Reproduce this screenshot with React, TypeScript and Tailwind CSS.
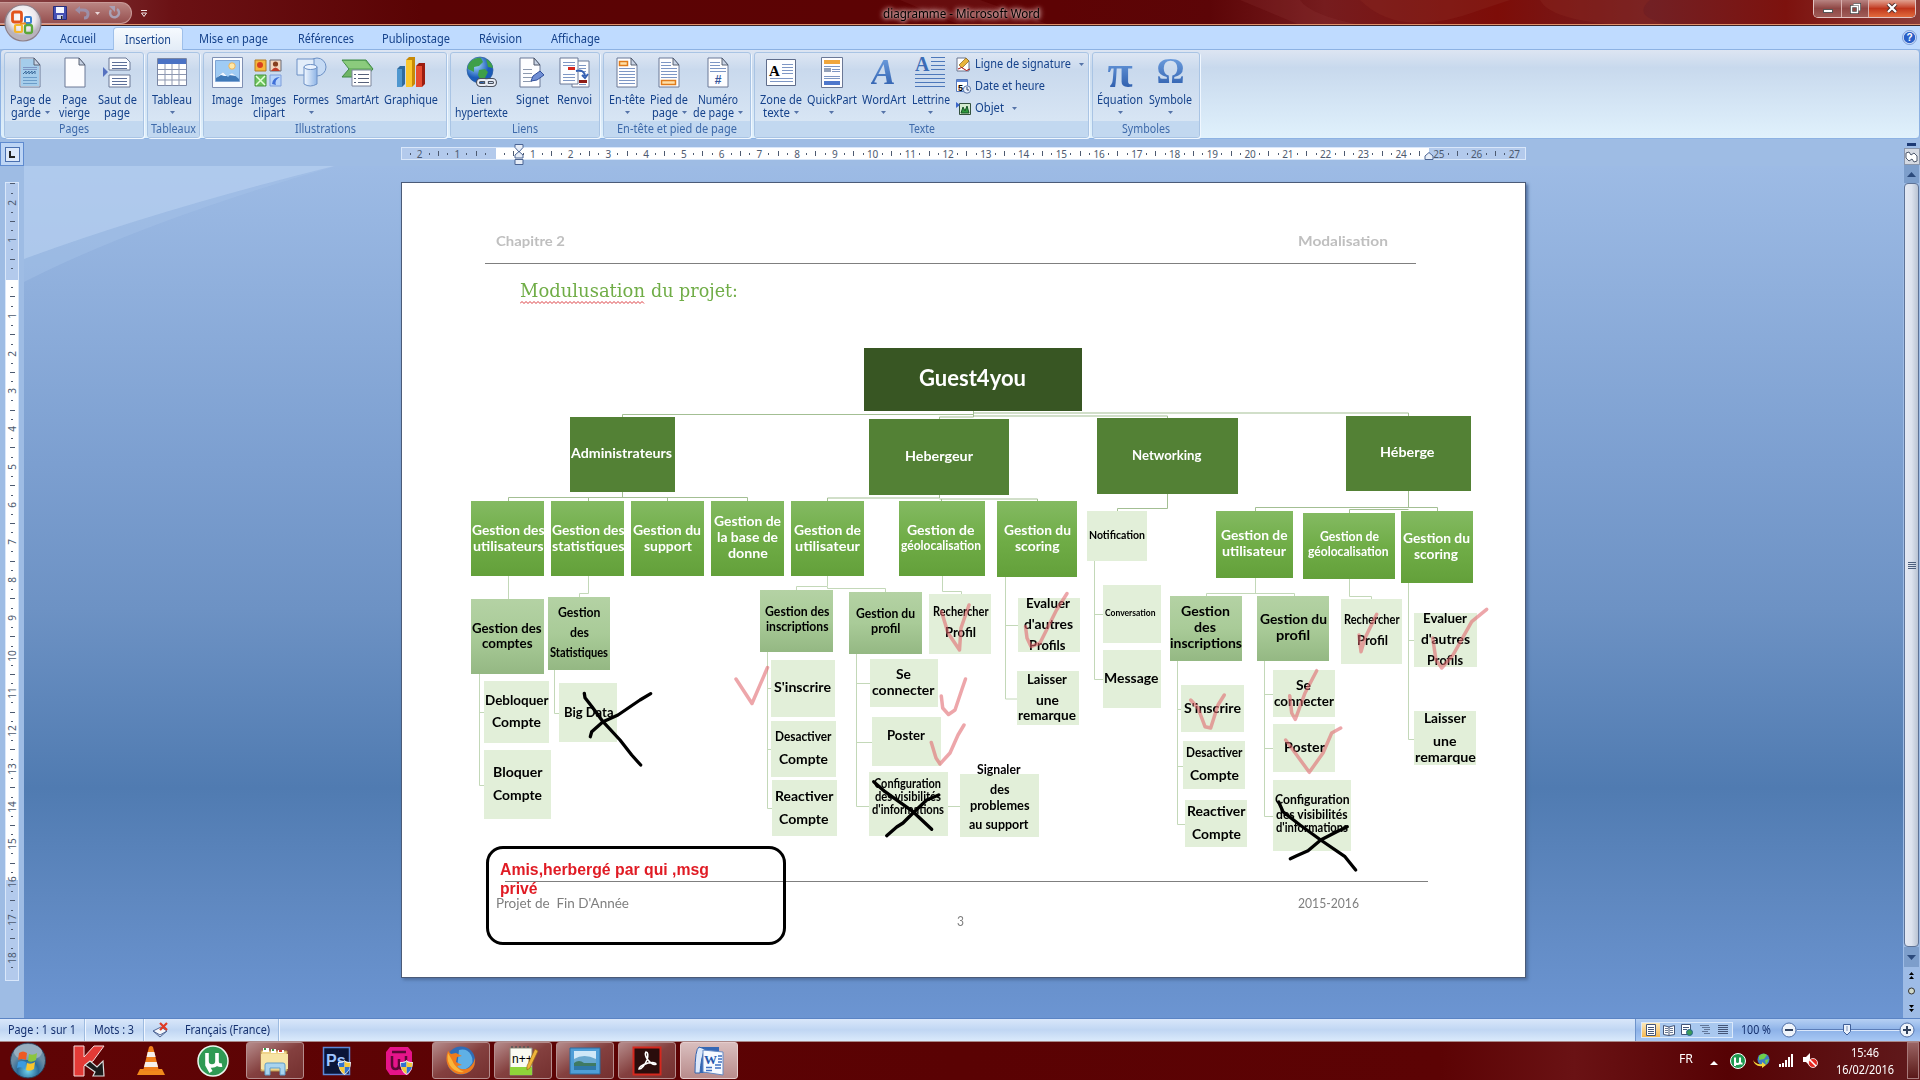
import React, { useLayoutEffect, useRef, useState } from "react";

/* Text squeezed or stretched horizontally to an exact width. */
function Fit({ w, children, className = "" }: { w: number; children: string; className?: string }) {
  const ref = useRef<HTMLSpanElement>(null);
  const [scale, setScale] = useState(1);
  useLayoutEffect(() => {
    const el = ref.current;
    if (el && el.offsetWidth) setScale(w / el.getBoundingClientRect().width * scale);
  }, [w, children]);
  return (
    <span className={"block shrink-0 text-left " + className} style={{ width: w }}>
      <span ref={ref} className="inline-block origin-left whitespace-pre" style={{ transform: `scaleX(${scale})` }}>
        {children}
      </span>
    </span>
  );
}

/* ---------- Ribbon icons ---------- */

const Sheet = ({ children, w = 22 }: { children?: React.ReactNode; w?: number }) => (
  <svg width={w} height="31" viewBox="0 0 22 31">
    <path d="M1 1h14l6 7v22H1z" fill="#fdfdff" stroke="#6b7896" />
    {children}
    <path d="M15 1v7h6z" fill="#c9d3e4" stroke="#4c5568" strokeWidth=".9" />
  </svg>
);
const lines = (x1: number, x2: number, ys: number[], c = "#7d96c4") =>
  ys.map((y) => <path key={y} d={`M${x1} ${y}H${x2}`} stroke={c} strokeWidth="1" />);

const IconCover = () => (
  <Sheet>
    <path d="M2 2h13l5 6v21H2z" fill="#a5cdeb" />
    {lines(4, 18, [10.5, 12.5])}
    <path d="M4 17l3-3v3l3-3v3l3-3v3l3-3v3" stroke="#3d6d9c" fill="none" />
    {lines(4, 18, [20.5, 23.5, 26.5], "#6b9cc8")}
  </Sheet>
);
const IconBreak = () => (
  <svg width="28" height="31" viewBox="0 0 28 31">
    <path d="M6 13V1h17l4 4v8zM6 30V18h21v12z" fill="#fdfdff" stroke="#6b7896" />
    {lines(9, 24, [5.5, 8.5, 11.5, 21.5, 24.5, 27.5], "#5d6f98")}
    <path d="M0 10l5 5-5 5z" fill="#5571c0" />
  </svg>
);
const IconTable = () => (
  <svg width="30" height="29" viewBox="0 0 30 29">
    <path d="M.5.5h29v27H.5z" fill="#fff" stroke="#7b87a4" />
    <path d="M1 1h28v5H1z" fill="#4a72c4" />
    <path d="M1 11.5h28M1 16.5h28M1 22h28M8 6v22M15 6v22M22 6v22" stroke="#8d97b0" />
  </svg>
);
const IconImage = () => (
  <svg width="31" height="31" viewBox="0 0 31 31">
    <path d="M.5.5h30v30H.5z" fill="#f8fbff" stroke="#7f90b3" />
    <path d="M3.500 3.500h24v21h-24z" fill="#9fcbf4" stroke="#7fa5d4" />
    <circle cx="20" cy="9" r="3.200" fill="#ffe9a8" stroke="#eeb45a" />
    <path d="M4 24v-3l7-6 5 5 4-4 7 6v2z" fill="#3f79b8" />
    <path d="M4 21l7-6 4 4-3 0-3-1zM17 18l3-2 4 3z" fill="#eef6ff" />
  </svg>
);
const IconClip = () => (
  <svg width="29" height="29" viewBox="0 0 29 29">
    <path d="M1 2h11v11H1z" fill="#f6b73c" stroke="#b17c24" />
    <circle cx="6" cy="7" r="3" fill="#d8401f" />
    <path d="M16 2h11v11H16z" fill="#f2d7c0" stroke="#6b6b77" />
    <circle cx="21.500" cy="6" r="2.600" fill="#874020" />
    <path d="M17 13q4.500-7 9 0z" fill="#c23c28" />
    <path d="M1 17h11v11H1z" fill="#6cc35c" stroke="#4b9440" />
    <path d="M2 18l9 9M11 18l-9 9" stroke="#e3ffd9" strokeWidth="1.500" />
    <path d="M16 17h11v11H16z" fill="#b8d3fa" stroke="#7f9edb" />
    <path d="M18 26q1-7 8-7-6 3-4 8z" fill="#3f6fd8" />
  </svg>
);
const IconShapes = () => (
  <svg width="31" height="31" viewBox="0 0 31 31">
    <defs>
      <linearGradient id="cyl" x1="0" x2="1">
        <stop offset="0" stopColor="#f2f8ff" />
        <stop offset="1" stopColor="#8eb4e6" />
      </linearGradient>
    </defs>
    <circle cx="21" cy="10" r="9" fill="#c5daf4" stroke="#6c90c5" />
    <path d="M1 2h17v16H1z" fill="#e2edfa" stroke="#6c90c5" />
    <path d="M8 10v17q6 4 13 0V10z" fill="url(#cyl)" stroke="#6c90c5" />
    <ellipse cx="14.500" cy="10" rx="6.500" ry="2.500" fill="#eaf3ff" stroke="#6c90c5" />
  </svg>
);
const IconSmart = () => (
  <svg width="33" height="29" viewBox="0 0 33 29">
    <path d="M1 2h24l7 9-7 8H1l7-8z" fill="#6fb566" stroke="#3f8a45" />
    <path d="M2 3h22l6 7H8z" fill="#8bcb7d" />
    <path d="M11 12h19v16H11z" fill="#fff" stroke="#7c869c" />
    {lines(17, 28, [16.5, 20.5, 24.500], "#56617a")}
    {lines(13, 15, [16.5, 20.5, 24.500], "#56617a")}
  </svg>
);
const IconChart = () => (
  <svg width="30" height="31" viewBox="0 0 30 31">
    <path d="M1 12l3-3h5v18l-3 3H1z" fill="#2f6b9f" />
    <path d="M1 12h5v18H1z" fill="#4f97cf" />
    <path d="M10 3l3-3h6v27l-3 3h-6z" fill="#c88a06" />
    <path d="M10 3h6v27h-6z" fill="#fbc72d" />
    <path d="M20 9l3-3h6v21l-3 3h-6z" fill="#9c1d10" />
    <path d="M20 9h6v21h-6z" fill="#e64c32" />
  </svg>
);
const IconLink = () => (
  <svg width="32" height="32" viewBox="0 0 32 32">
    <defs>
      <radialGradient id="globe" cx=".35" cy=".3">
        <stop offset="0" stopColor="#a8dcff" />
        <stop offset="1" stopColor="#1b5bb8" />
      </radialGradient>
    </defs>
    <circle cx="14" cy="14" r="13" fill="url(#globe)" stroke="#2a5c9e" strokeWidth=".7" />
    <path d="M5 5q6-4 10-3l2 4-4 4-5 1 0 5-6-3q-1-4 3-8zM13 14l6-1 3 3-4 8-3 1-3-6zM20 3q6 3 7 9l-5-1z" fill="#3f9f49" />
    <g fill="none" stroke="#4b515e" strokeWidth="4">
      <rect x="12" y="24" width="9" height="5" rx="2.500" />
      <rect x="20" y="24" width="9" height="5" rx="2.500" />
    </g>
    <g fill="none" stroke="#e9edf5" strokeWidth="1.800">
      <rect x="12" y="24" width="9" height="5" rx="2.500" />
      <rect x="20" y="24" width="9" height="5" rx="2.500" />
    </g>
  </svg>
);
const IconBookmark = () => (
  <svg width="26" height="31" viewBox="0 0 26 31">
    <path d="M1 1h14l6 7v22H1z" fill="#fdfdff" stroke="#6b7896" />
    <path d="M15 1v7h6z" fill="#c9d3e4" stroke="#4c5568" />
    {lines(4, 13, [12.5, 16.5, 20.5, 24.5], "#8c98ae")}
    <path d="M12 24l2-5 7-5 4 4-7 5z" fill="#6f8ed4" stroke="#31509c" />
  </svg>
);
const IconXref = () => (
  <svg width="31" height="31" viewBox="0 0 31 31">
    <path d="M13 4h17v26H13z" fill="#fdfdff" stroke="#6b7896" />
    {lines(20, 27, [8.5, 11.5, 14.5, 27.5])}
    <path d="M20 23h8v3h-8z" fill="#8e1c16" />
    <path d="M1 1h18v26H1z" fill="#fdfdff" stroke="#6b7896" />
    {lines(4, 16, [5.5, 8.5, 17.5, 20.5, 23.5])}
    <path d="M9 10h7v3H9z" fill="#d6261c" />
    <path d="M17 14q8-2 9 5m-3-1l3 3 3-4" fill="none" stroke="#345fb4" strokeWidth="2" />
  </svg>
);
const IconHeader = () => (
  <Sheet>
    {lines(3, 19, [11.5, 14.5, 17.5, 20.5, 23.5, 26.5])}
    <path d="M3.500 4.500h8v4h-8z" fill="#ffdfa8" stroke="#e07b1b" strokeWidth="1.500" />
  </Sheet>
);
const IconFooter = () => (
  <Sheet>
    {lines(3, 13, [5.5, 8.5])}
    {lines(3, 19, [11.5, 14.5, 17.5, 20.500])}
    <path d="M3.500 23.500h14v4h-14z" fill="#ffdfa8" stroke="#e07b1b" strokeWidth="1.500" />
  </Sheet>
);
const IconPageNo = () => (
  <Sheet>
    {lines(3, 13, [5.5, 8.5])}
    {lines(3, 19, [11.5, 14.500])}
    <text x="11" y="27" textAnchor="middle" fontSize="12" fontWeight="bold" fill="#33559b" fontFamily="Liberation Sans, sans-serif">#</text>
  </Sheet>
);
const IconTextbox = () => (
  <svg width="30" height="27" viewBox="0 0 30 27">
    <path d="M.5.500h29v26H.500z" fill="#fdfeff" stroke="#5f6d8b" />
    <text x="3" y="17" fontSize="15" fontWeight="bold" fontFamily="Liberation Serif, serif">A</text>
    {lines(16, 27, [5.5, 8.5, 11.5, 14.500])}
    {lines(4, 27, [19.5, 22.500])}
  </svg>
);
const IconQuick = () => (
  <svg width="22" height="31" viewBox="0 0 22 31">
    <path d="M.5.5h21v30H.5z" fill="#fdfdff" stroke="#6b7896" />
    <path d="M3 3h16v4H3z" fill="#f0a63c" />
    {lines(3, 19, [9.5, 19.5, 21.500])}
    <path d="M3 11h7v4H3z" fill="#93a0b9" />
    {lines(11, 19, [12.500, 14.500])}
    <path d="M3 24h16v4H3z" fill="#4e77cc" />
  </svg>
);
const IconDrop = () => (
  <svg width="31" height="32" viewBox="0 0 31 32">
    <text x="0" y="15" fontSize="20" fontWeight="bold" fill="#3b6cb6" fontFamily="Liberation Serif, serif">A</text>
    {lines(16, 30, [1.5, 5.5, 9.5, 13.500], "#4d78ba")}
    {lines(0, 30, [18.5, 22.5, 26.500, 30.500], "#4d78ba")}
  </svg>
);
const IconSig = () => (
  <svg width="15" height="15" viewBox="0 0 15 15">
    <path d="M1 1h9l3 3v10H1z" fill="#fff" stroke="#68748e" />
    <path d="M3 8l3 3 7-7-3-3z" fill="#e8b43c" stroke="#84601a" strokeWidth=".7" />
    <path d="M2 12q4-3 6 0t6 0" stroke="#a11" fill="none" />
  </svg>
);
const IconDate = () => (
  <svg width="15" height="15" viewBox="0 0 15 15">
    <path d="M.5.5h11v12H.5z" fill="#fff" stroke="#5578bb" />
    <path d="M1 1h10v2H1z" fill="#5d86d4" />
    <text x="2" y="11.500" fontSize="9" fontWeight="bold" fontFamily="Liberation Sans, sans-serif">5</text>
    <circle cx="11" cy="10.500" r="3.700" fill="#e8f0fd" stroke="#5c77a8" />
    <path d="M11 8v3h2" stroke="#33486e" fill="none" />
  </svg>
);
const IconObj = () => (
  <svg width="15" height="15" viewBox="0 0 15 15">
    <path d="M3.500 2.500h11v11h-11z" fill="#d4ecd0" stroke="#33513d" />
    <path d="M5 12l2-6 2 4 2-5 2 7z" fill="#2f9a3c" stroke="#185426" />
    <path d="M0 1l4 3-4 3z" fill="#3b66c8" />
  </svg>
);

const Glyph = ({ children, className = "" }: { children: string; className?: string }) => (
  <span
    className={
      "bg-gradient-to-b from-[#6fa0e0] to-[#2f5fae] bg-clip-text font-['Liberation_Serif',serif] font-bold leading-[32px] text-transparent " +
      className
    }
  >
    {children}
  </span>
);

const Arrow = ({ className = "" }: { className?: string }) => (
  <svg width="5" height="3" viewBox="0 0 5 3" className={className}>
    <path d="M0 0h5L2.500 3z" fill="#5573a8" />
  </svg>
);

/* ---------- Ribbon ---------- */

type Item = { w: number; icon: React.ReactNode; l1: string; w1: number; l2?: string; w2?: number; arrow?: boolean };

function Tool({ w, icon, l1, w1, l2, w2 = 0, arrow }: Item) {
  return (
    <div className="flex shrink-0 flex-col items-center text-xs text-[#15428b]" style={{ width: w }}>
      <div className="flex h-8 items-center justify-center">{icon}</div>
      <div className="mt-[5px] h-[13px] leading-[13px]"><Fit w={w1}>{l1}</Fit></div>
      <div className="flex h-[13px] items-center gap-1 leading-[13px]">
        {l2 && <Fit w={w2}>{l2}</Fit>}
        {arrow && <Arrow />}
      </div>
    </div>
  );
}

function Group({ w, title, tw, mr = 3, children }: { w: number; title: string; tw: number; mr?: number; children: React.ReactNode }) {
  return (
    <div
      className="flex h-[86px] shrink-0 flex-col rounded-[3px] border border-[#a9c4e4] bg-gradient-to-b from-[#dde6f3] via-[#c9d9ed] via-20% to-[#dce9f6] shadow-[1px_1px_0_#f0f7ff]"
      style={{ width: w, marginRight: mr }}
    >
      <div className="flex h-[68px] justify-center pr-[3px] pt-[3px]">{children}</div>
      <div className="flex h-4 items-center justify-center rounded-b-[2px] bg-[#c2d8f0] text-xs leading-4 text-[#3e6aaa]">
        <Fit w={tw}>{title}</Fit>
      </div>
    </div>
  );
}

const pages: Item[] = [
  { w: 52, icon: <IconCover />, l1: "Page de", w1: 41, l2: "garde", w2: 30, arrow: true },
  { w: 37, icon: <Sheet />, l1: "Page", w1: 25, l2: "vierge", w2: 31 },
  { w: 48, icon: <IconBreak />, l1: "Saut de", w1: 39, l2: "page", w2: 26 },
];
const illus: Item[] = [
  { w: 41, icon: <IconImage />, l1: "Image", w1: 31 },
  { w: 42, icon: <IconClip />, l1: "Images", w1: 35, l2: "clipart", w2: 32 },
  { w: 43, icon: <IconShapes />, l1: "Formes", w1: 36, arrow: true },
  { w: 49, icon: <IconSmart />, l1: "SmartArt", w1: 43 },
  { w: 59, icon: <IconChart />, l1: "Graphique", w1: 54 },
];
const liens: Item[] = [
  { w: 58, icon: <IconLink />, l1: "Lien", w1: 21, l2: "hypertexte", w2: 53 },
  { w: 43, icon: <IconBookmark />, l1: "Signet", w1: 33 },
  { w: 41, icon: <IconXref />, l1: "Renvoi", w1: 35 },
];
const entete: Item[] = [
  { w: 43, icon: <IconHeader />, l1: "En-tête", w1: 36, arrow: true },
  { w: 41, icon: <IconFooter />, l1: "Pied de", w1: 38, l2: "page", w2: 26, arrow: true },
  { w: 56, icon: <IconPageNo />, l1: "Numéro", w1: 40, l2: "de page", w2: 41, arrow: true },
];
const texte: Item[] = [
  { w: 49, icon: <IconTextbox />, l1: "Zone de", w1: 42, l2: "texte", w2: 27, arrow: true },
  { w: 53, icon: <IconQuick />, l1: "QuickPart", w1: 50, arrow: true },
  { w: 51, icon: <Glyph className="text-[36px] italic">A</Glyph>, l1: "WordArt", w1: 44, arrow: true },
  { w: 43, icon: <IconDrop />, l1: "Lettrine", w1: 38, arrow: true },
];
const symb: Item[] = [
  { w: 52, icon: <Glyph className="text-[46px]">π</Glyph>, l1: "Équation", w1: 46, arrow: true },
  { w: 49, icon: <Glyph className="text-[35px]">Ω</Glyph>, l1: "Symbole", w1: 43, arrow: true },
];
const tools = (a: Item[]) => a.map((i) => <Tool key={i.l1} {...i} />);

const small: [React.ReactNode, string, number, boolean][] = [
  [<IconSig />, "Ligne de signature", 96, true],
  [<IconDate />, "Date et heure", 70, false],
  [<IconObj />, "Objet", 29, true],
];

const tabs: [string, number, number][] = [
  ["Accueil", 36, 43], ["Insertion", 46, 70], ["Mise en page", 69, 101], ["Références", 56, 83],
  ["Publipostage", 68, 98], ["Révision", 43, 70], ["Affichage", 49, 80],
];

function TitleBar() {
  return (
    <div className="relative h-[26px] shrink-0 overflow-hidden border-b border-[#3a2428] bg-[linear-gradient(90deg,#8a4648_0,#6b1114_9%,#5a0304_22%,#5d0304_55%,#5c0507_63%,#761c1e_69%,#7d0d08_78%,#722024_86%,#7d120e_93%,#8c3c38_100%)]">
      <svg className="absolute left-0 top-0" width="1920" height="25">
        <path d="M1360 0q40 40 120 10l30-10zM1540 0q10 20 80 25h50q-40-8-20-25z" fill="#8c2a22" opacity=".35" />
        <path d="M1240 0l60 25h60q-50-10-60-25zM900 0l60 25h90l-70-25z" fill="#a04a48" opacity=".15" />
      </svg>
      <div className="absolute inset-x-0 bottom-0 h-px bg-[#e0906c]" />
      <div className="relative flex h-[25px] items-start">
        <div className="mt-0.5 flex h-[22px] w-[132px] items-center rounded-r-full border border-l-0 border-[#c99a98] bg-gradient-to-b from-[#b98482] to-[#96504f] pl-[53px]">
          <svg width="14" height="14" viewBox="0 0 14 14">
            <path d="M.5.5h13v13H.5z" fill="#4650b4" stroke="#272d78" />
            <path d="M3 1h8v6H3z" fill="#f4f6ff" />
            <path d="M4 9h6v4H4z" fill="#c9d0ec" /><path d="M8 10h1.500v3H8z" fill="#222" />
          </svg>
          <svg className="ml-2" width="16" height="14" viewBox="0 0 16 14">
            <path d="M3 4h5q5 0 5 4t-4 4" fill="none" stroke="#9c8fa8" strokeWidth="3" /><path d="M0 4l5-4v8z" fill="#9c8fa8" />
          </svg>
          <svg className="ml-1" width="5" height="3"><path d="M0 0h5L2.500 3z" fill="#ead7d8" /></svg>
          <svg className="ml-2" width="14" height="14" viewBox="0 0 14 14">
            <path d="M9 3a4.500 4.500 0 1 1-6 1" fill="none" stroke="#a9a0b4" strokeWidth="2.500" /><path d="M1 0h6v6z" fill="#a9a0b4" />
          </svg>
        </div>
        <svg className="ml-[9px] mt-2.5" width="6" height="7" viewBox="0 0 6 7"><path d="M0 .5h6M.5 3h5L3 6.500z" stroke="#f2e6e6" fill="none" /></svg>
        <div className="flex flex-1 justify-center pr-[37px]">
          <div className="h-6 pt-1 text-[12px] leading-5 text-black [text-shadow:0_0_3px_#d8b0b0,0_0_5px_#d0a4a4,0_0_6px_#c89898,0_0_8px_#c09090]">
            <Fit w={157}>diagramme - Microsoft Word</Fit>
          </div>
        </div>
        <div className="mr-[4px] flex h-[18px] w-[103px] overflow-hidden rounded-b-[5px] border border-t-0 border-[#e3c4c2]">
          <div className="flex w-7 items-end justify-center border-r border-[#d9b0ae] bg-gradient-to-b from-[#b88482] via-[#8e4644] via-50% to-[#a05d58] pb-1"><div className="h-[4px] w-[10px] border border-[#555] bg-white" /></div>
          <div className="flex w-[27px] items-center justify-center border-r border-[#d9b0ae] bg-gradient-to-b from-[#b88482] via-[#8e4644] via-50% to-[#a05d58]">
            <svg width="11" height="11" viewBox="0 0 11 11"><path d="M3.500 1.500h6v6M1.500 3.500h6v6h-6z" fill="none" stroke="#444" strokeWidth="3" /><path d="M3.500 1.500h6v6M1.500 3.500h6v6h-6z" fill="none" stroke="#fff" strokeWidth="1.500" /></svg>
          </div>
          <div className="flex flex-1 items-center justify-center bg-gradient-to-b from-[#e0a090] via-[#c0351b] via-50% to-[#e26a3c] pb-[2px]">
            <svg width="12" height="10" viewBox="0 0 12 10"><path d="M2 1l8 8M10 1L2 9" stroke="#4a2a28" strokeWidth="4" /><path d="M2 1l8 8M10 1L2 9" stroke="#fff" strokeWidth="2.300" /></svg>
          </div>
        </div>
      </div>
    </div>
  );
}

const OfficeButton = () => (
  <svg className="absolute left-[3px] top-[3px] z-10" width="40" height="40" viewBox="0 0 40 40">
    <defs>
      <radialGradient id="orb" cx=".5" cy=".35">
        <stop offset="0" stopColor="#fff" /><stop offset=".7" stopColor="#ece9ee" /><stop offset="1" stopColor="#b9b3bd" />
      </radialGradient>
    </defs>
    <circle cx="20" cy="20" r="18" fill="url(#orb)" stroke="#8d7f88" strokeWidth="1.200" />
    <g fill="none" strokeWidth="2.800">
      <rect x="9.500" y="9" width="9" height="10" rx="2" stroke="#e2541c" />
      <rect x="22" y="14" width="6" height="6" rx="1" stroke="#3b80d0" strokeWidth="2" />
      <rect x="12" y="22" width="7" height="7" rx="1" stroke="#f5b62c" strokeWidth="2.200" />
      <rect x="22" y="22" width="7" height="8" rx="2" stroke="#5ba83a" strokeWidth="2.300" />
      <path d="M17 20.500h6" stroke="#f08c20" strokeWidth="2" />
    </g>
  </svg>
);

function Ribbon() {
  return (
    <>
      <div className="flex h-[23px] shrink-0 items-end justify-between bg-[#bfdbff] pr-[3px]">
        <div className="flex h-[22px] pl-[56px]">
          {tabs.map(([t, w, box], i) => (
            <div
              key={t}
              className={
                "flex items-center justify-center pt-[2px] text-xs leading-4 text-[#15428b] " +
                (i === 1 ? "z-[1] ml-[14px] h-[23px] rounded-t-[4px] border border-b-0 border-[#9fc0ea] bg-gradient-to-b from-[#f6fafe] to-[#e3ecf7]" : "")
              }
              style={{ width: box }}
            >
              <Fit w={w}>{t}</Fit>
            </div>
          ))}
        </div>
        <svg className="mb-[4px]" width="15" height="15" viewBox="0 0 15 15">
          <circle cx="7.500" cy="7.500" r="6.500" fill="#2a5fc8" stroke="#dfeafc" strokeWidth="1.500" />
          <circle cx="7.500" cy="7.500" r="7" fill="none" stroke="#4c79c4" strokeWidth=".7" />
          <text x="7.500" y="11" textAnchor="middle" fontSize="10" fontWeight="bold" fill="#fff" fontFamily="Liberation Sans, sans-serif">?</text>
        </svg>
      </div>
      <div className="h-[91px] shrink-0 bg-[#9ebce4] pb-px">
        <div className="flex h-[90px] rounded-[4px] border border-[#8db2e3] bg-gradient-to-b from-[#dde5f2] via-[#c8d9ed] via-20% to-[#e0f1fc] pl-[3px] pt-[2px]">
          <Group w={140} title="Pages" tw={30}>{tools(pages)}</Group>
          <Group w={53} title="Tableaux" tw={45}>
            <Tool w={48} icon={<IconTable />} l1="Tableau" w1={40} arrow />
          </Group>
          <Group w={244} title="Illustrations" tw={61}>{tools(illus)}</Group>
          <Group w={150} title="Liens" tw={26}>{tools(liens)}</Group>
          <Group w={148} title="En-tête et pied de page" tw={120}>{tools(entete)}</Group>
          <Group w={335} title="Texte" tw={26}>
            {tools(texte)}
            <div className="flex w-[132px] flex-col gap-[6px] pl-[4px]">
              {small.map(([ic, t, w, a]) => (
                <div key={t} className="flex h-4 items-center gap-1 text-xs leading-4 text-[#15428b]">
                  {ic}<Fit w={w}>{t}</Fit>{a && <Arrow className="ml-1" />}
                </div>
              ))}
            </div>
          </Group>
          <Group w={108} title="Symboles" tw={48}>{tools(symb)}</Group>
        </div>
      </div>
    </>
  );
}

/* ---------- Rulers ---------- */

function Marks({ from, to, vertical }: { from: number; to: number; vertical?: boolean }) {
  const out: React.ReactNode[] = [];
  for (let k = from; k <= to; k++) {
    const m = ((k % 4) + 4) % 4;
    const n = Math.abs(k / 4);
    out.push(
      <span
        key={k}
        className={
          "flex shrink-0 items-center justify-center overflow-visible text-[10px] leading-none text-[#4d5a70] " +
          (vertical ? "h-[9.45px] w-full" : "h-full w-[9.45px]")
        }
      >
        {m === 0 && n !== 0 ? (
          <span className={vertical ? "-rotate-90" : ""}>{n}</span>
        ) : m === 2 ? (
          <i className={vertical ? "h-px w-[5px] bg-[#4d5a70]" : "h-[5px] w-px bg-[#4d5a70]"} />
        ) : m === 0 ? null : (
          <i className={vertical ? "h-px w-[2px] bg-[#4d5a70]" : "h-[2px] w-px bg-[#4d5a70]"} />
        )}
      </span>
    );
  }
  return <>{out}</>;
}

/* ---------- Diagram ---------- */

type Line = [text: string, x1: number, x2: number, y: number, size?: "xl" | "sm" | "xs" | "xxs"];
type Node = { k: "root" | "dark" | "mid" | "sage" | "pale"; b: [number, number, number, number]; t: Line[] };

const nodes: Node[] = [
  { k: "root", b: [864, 348, 218, 63], t: [["Guest4you", 919.5, 1025.5, 379, "xl"]] },
  { k: "dark", b: [570, 417, 105, 75], t: [["Administrateurs", 572, 672, 453.5]] },
  { k: "dark", b: [869, 419, 140, 76], t: [["Hebergeur", 906, 973, 456.5]] },
  { k: "dark", b: [1097, 418, 141, 76], t: [["Networking", 1133, 1201.5, 455.5]] },
  { k: "dark", b: [1346, 416, 125, 75], t: [["Héberge", 1381, 1434.5, 452.5]] },
  { k: "mid", b: [471, 501, 73, 75], t: [["Gestion des", 472.5, 544, 530.5], ["utilisateurs", 473.5, 543, 546.5]] },
  { k: "mid", b: [551, 501, 73, 75], t: [["Gestion des", 552.5, 624, 530.5], ["statistiques", 552.5, 624, 546.5]] },
  { k: "mid", b: [631, 501, 73, 75], t: [["Gestion du", 634, 701, 530.5], ["support", 644.5, 691.5, 546.5]] },
  { k: "mid", b: [711, 501, 73, 75], t: [["Gestion de", 714.5, 780.5, 521.5], ["la base de", 717.5, 777.5, 537.5], ["donne", 728.5, 767.5, 553.5]] },
  { k: "mid", b: [791, 501, 73, 75], t: [["Gestion de", 794.5, 860.5, 530.5], ["utilisateur", 796, 860, 546.5]] },
  { k: "mid", b: [899, 501, 86, 75], t: [["Gestion de", 907.5, 974, 530.5], ["géolocalisation", 901.5, 980.5, 546.5, "sm"]] },
  { k: "mid", b: [997, 501, 80, 76], t: [["Gestion du", 1004.5, 1070.5, 530.5], ["scoring", 1015.5, 1059, 547]] },
  { k: "pale", b: [1087, 511, 60, 50], t: [["Notification", 1089.5, 1144.500, 535.5, "xs"]] },
  { k: "mid", b: [1216, 511, 77, 67], t: [["Gestion de", 1221.5, 1287, 535.5], ["utilisateur", 1222.5, 1285.5, 551.5]] },
  { k: "mid", b: [1303, 513, 92, 66], t: [["Gestion de", 1320.5, 1378.5, 538, "sm"], ["géolocalisation", 1309, 1388.5, 553, "sm"]] },
  { k: "mid", b: [1401, 511, 72, 72], t: [["Gestion du", 1403.5, 1469.5, 538.5], ["scoring", 1414.5, 1457.5, 554.5]] },
  { k: "sage", b: [471, 599, 73, 75], t: [["Gestion des", 473, 541.5, 628.5], ["comptes", 482.5, 532, 644]] },
  { k: "sage", b: [548, 597, 62, 73], t: [["Gestion", 558.5, 600, 614, "sm"], ["des", 570.5, 588.500, 634, "sm"], ["Statistiques", 550.5, 607.5, 654, "sm"]] },
  { k: "sage", b: [760, 590, 73, 62], t: [["Gestion des", 765.5, 829, 613, "sm"], ["inscriptions", 766.5, 828, 628, "sm"]] },
  { k: "sage", b: [849, 592, 73, 62], t: [["Gestion du", 856.5, 914.5, 615, "sm"], ["profil", 871.5, 900, 630, "sm"]] },
  { k: "sage", b: [1170, 596, 72, 65], t: [["Gestion", 1181.5, 1229.5, 611.5], ["des", 1194.5, 1215.5, 627.5], ["inscriptions", 1170.500, 1241.5, 643.5]] },
  { k: "sage", b: [1257, 596, 72, 65], t: [["Gestion du", 1260.5, 1326.5, 619.5], ["profil", 1276.5, 1309.5, 635.5]] },
  { k: "pale", b: [929, 594, 62, 60], t: [["Rechercher", 933.5, 988, 613, "sm"], ["Profil", 945.5, 975.5, 632.5]] },
  { k: "pale", b: [1018, 598, 62, 54], t: [["Evaluer", 1026.5, 1069.5, 603.5], ["d'autres", 1024.5, 1072.5, 624.5], ["Profils", 1030, 1065.5, 645.5]] },
  { k: "pale", b: [1017, 671, 62, 54], t: [["Laisser", 1027.5, 1066.5, 679.5], ["une", 1036.5, 1058.5, 700.5], ["remarque", 1018.500, 1075.5, 715.5]] },
  { k: "pale", b: [1103, 585, 58, 58], t: [["Conversation", 1106, 1155.5, 614, "xxs"]] },
  { k: "pale", b: [1103, 650, 58, 58], t: [["Message", 1104.5, 1158, 678.5]] },
  { k: "pale", b: [484, 681, 65, 62], t: [["Debloquer", 485.5, 548, 701], ["Compte", 492.5, 540.5, 722.5]] },
  { k: "pale", b: [484, 750, 67, 69], t: [["Bloquer", 493.5, 542, 772.5], ["Compte", 493.5, 541.5, 795.5]] },
  { k: "pale", b: [559, 683, 58, 59], t: [["Big Data", 564.5, 613, 712.5]] },
  { k: "pale", b: [771, 660, 64, 57], t: [["S'inscrire", 774.5, 830.5, 687.5]] },
  { k: "pale", b: [771, 721, 65, 56], t: [["Desactiver", 775.5, 831, 738, "sm"], ["Compte", 779.5, 827.5, 759.5]] },
  { k: "pale", b: [772, 780, 65, 56], t: [["Reactiver", 775.5, 833, 796.5], ["Compte", 780, 828.5, 819.5]] },
  { k: "pale", b: [870, 659, 68, 48], t: [["Se", 896.5, 910.5, 674.5], ["connecter", 872.5, 934, 690.5]] },
  { k: "pale", b: [872, 717, 69, 49], t: [["Poster", 887.5, 924.5, 735.5]] },
  { k: "pale", b: [869, 772, 79, 64], t: [["Configuration", 875, 941, 785, "sm"], ["des visibilités", 875.5, 940.5, 798, "sm"], ["d'informations", 872.5, 943.5, 811, "sm"]] },
  { k: "pale", b: [960, 774, 79, 63], t: [["Signaler", 978, 1020.500, 771, "sm"], ["des", 990.5, 1009, 791, "sm"], ["problemes", 970.5, 1029, 806.5, "sm"], ["au support", 970, 1028.5, 826, "sm"]] },
  { k: "pale", b: [1341, 599, 61, 65], t: [["Rechercher", 1344.5, 1399, 621, "sm"], ["Profil", 1357.5, 1387.5, 640.5]] },
  { k: "pale", b: [1414, 613, 63, 54], t: [["Evaluer", 1423.5, 1466.5, 618.5], ["d'autres", 1421.5, 1469.5, 639.5], ["Profils", 1427.5, 1462.5, 660.5]] },
  { k: "pale", b: [1414, 711, 62, 54], t: [["Laisser", 1424.5, 1465.5, 718.5], ["une", 1433.5, 1456, 741.5], ["remarque", 1415.500, 1475.5, 757.5]] },
  { k: "pale", b: [1181, 685, 63, 47], t: [["S'inscrire", 1184.5, 1240.5, 708.5]] },
  { k: "pale", b: [1273, 670, 62, 47], t: [["Se", 1296.5, 1310.5, 685.5], ["connecter", 1274.5, 1333.5, 701.5]] },
  { k: "pale", b: [1183, 741, 62, 48], t: [["Desactiver", 1186.5, 1242, 754, "sm"], ["Compte", 1190.5, 1238.5, 775.5]] },
  { k: "pale", b: [1185, 800, 62, 47], t: [["Reactiver", 1187.5, 1245, 811.5], ["Compte", 1192.5, 1240.5, 834.5]] },
  { k: "pale", b: [1273, 724, 62, 48], t: [["Poster", 1284.500, 1324.5, 747.5]] },
  { k: "pale", b: [1273, 780, 78, 71], t: [["Configuration", 1275.5, 1349, 801, "sm"], ["des visibilités", 1276.5, 1347, 816, "sm"], ["d'informations", 1276.500, 1347.5, 829, "sm"]] },
];

const skin = {
  root: "bg-[#385623] text-white",
  dark: "bg-[#538135] text-white",
  mid: "bg-gradient-to-b from-[#84ba62] via-[#70ad47] via-50% to-[#63a03a] text-white",
  sage: "bg-gradient-to-b from-[#b4d2a4] via-[#a9cb98] via-50% to-[#94b883] text-black",
  pale: "bg-[#e2efd9] text-black",
};
const sizes = {
  xl: "text-[22px]",
  md: "text-[14px]",
  sm: "text-[12.5px]",
  xs: "text-[10.5px]",
  xxs: "text-[8.5px]",
};

const dark = [
  "M973.5 411v6M622.5 417v-2.500H973.500V413H1408.500v3M939.500 419v-2H973.500v-1H1167.500v2",
  "M622.5 492v5.500M508.500 501v-3.500H747.500v3.500M588.500 498v3M667.500 498v3",
  "M939.500 495v3H827.500v3M939.500 499H1037.500v3M941.500 499v3",
  "M1167.500 494v14.500H1117.500v2.500M1408.500 491v17M1255.500 511v-3.500H1437.500v3.500M1349.500 513v-3.500h59",
];
const light = [
  "M508.500 576v23M588.500 576v17.500H579.500v4M827.500 576v10.500H796.500v4M827.500 587v1.500H885.500v4",
  "M942.500 576v15.500H961.500v3M1005.500 577v122H1017M1005.500 625.500H1018",
  "M479.500 674v111.500H484M479.500 712.500H484M554.500 670v43.500H559",
  "M767.500 652v156.500H772M767.500 688.500H771M767.500 749.500H771",
  "M856.500 654v152.500H869M856.500 683.500H870M856.500 742.500H872M948 806.500H960",
  "M1094.500 561v118.500H1103M1094.500 614.500H1103",
  "M1255.500 578v15.500M1206.500 596v-2.500H1294.500v2.500M1349.500 579v17.500H1371.500v3",
  "M1408.500 583v156.500H1414M1408.500 640.500H1414",
  "M1177.500 661v163.500H1185M1177.500 709.500H1181M1177.500 766.500H1183",
  "M1264.500 661v155.500H1273M1264.500 694.500H1273M1264.500 748.500H1273",
];
const ticks = [
  "M736 679L752 703.500L767.500 667.500",
  "M941.500 611.500L948 633L959.500 650L961 628L969 605",
  "M1025.500 626.500L1027 638L1031 646.500L1040 643L1056.500 610L1067 593.500",
  "M941.300 696L942.700 708L948.500 714.500L955 710L961.700 690L965.500 679",
  "M931.300 742.500L936 758L940 764L950 753L958 735L964 725",
  "M1190.700 700L1198 708L1205 726.700L1210.700 728L1218 705L1224.300 695",
  "M1289.700 695.700L1291.700 713L1295.300 719.300L1305 693L1316.700 670.700",
  "M1285.700 740L1296.700 755L1309.300 772.300L1323 753L1331.700 733L1340.700 728",
  "M1359 635L1361 651.700L1365 638L1376.700 614.300",
  "M1432.700 638L1436 660L1441.700 668L1453 655L1471.700 621.700L1486.700 609.300",
];
const crosses = [
  "M584.300 693.300L585 697.700L592 706.700L603 721.700L620 740L631.700 755L640.700 765",
  "M650.700 693.700L640 700L618 715L603 721.700L591.700 731.700L590.300 736.700",
  "M873.700 781.700L885 791.700L913 811.700L931.700 829.300",
  "M938.700 795L926.700 800L913 813L903 823L896.700 827L886.700 835.700",
  "M1278.700 802L1283 811.700L1300 825L1320.700 840L1345 856.700L1355.700 870",
  "M1347.300 826.700L1336.700 831.700L1320.700 840L1308 850.700L1296.700 855.700L1290.300 858.700",
];

/* Page origin inside the window, used to place the diagram canvas. */
const OX = 401;
const OY = 182;

function Diagram() {
  return (
    <div className="absolute inset-0 font-['Lato','Open_Sans',sans-serif] font-bold">
      <svg className="absolute inset-0" width="1123" height="795" viewBox={`${OX} ${OY} 1123 795`} fill="none">
        {dark.map((d) => <path key={d} d={d} stroke="#a3bf93" />)}
        {light.map((d) => <path key={d} d={d} stroke="#c3d8b8" />)}
      </svg>
      {nodes.map((n, i) => (
        <div
          key={i}
          className={"absolute " + skin[n.k]}
          style={{ left: n.b[0] - OX, top: n.b[1] - OY, width: n.b[2], height: n.b[3] }}
        >
          {n.t.map(([t, x1, x2, y, s]) => (
            <div
              key={t}
              className={"absolute flex h-5 items-center leading-5 " + sizes[s ?? "md"]}
              style={{ left: x1 - n.b[0] - 1, top: y - n.b[1] - 11 }}
            >
              <Fit w={x2 - x1 + 1}>{t}</Fit>
            </div>
          ))}
        </div>
      ))}
      <svg className="absolute inset-0" width="1123" height="795" viewBox={`${OX} ${OY} 1123 795`} fill="none" strokeLinecap="round" strokeLinejoin="round">
        {ticks.map((d) => <path key={d} d={d} stroke="#e0666c" strokeOpacity=".58" strokeWidth="3.500" />)}
        {crosses.map((d) => <path key={d} d={d} stroke="#000" strokeWidth="3.300" />)}
      </svg>
    </div>
  );
}

function Page() {
  return (
    <div className="relative ml-[377px] mt-4 h-[796px] w-[1125px] border border-[#4b5b78] bg-white font-['Lato','Open_Sans',sans-serif] shadow-[2px_2px_3px_#4f6f9f]">
      <div className="ml-[83px] flex h-[81px] w-[931px] items-end justify-between border-b border-[#7f7f7f] pb-[12px] pl-[11px] pr-[28px] text-[14px] font-bold leading-5 text-[#bfbfbf]">
        <Fit w={69}>Chapitre 2</Fit>
        <Fit w={90}>Modalisation</Fit>
      </div>
      <div className="ml-[118px] mt-3.5 flex gap-[6px] font-['DejaVu_Serif',serif] text-[19px] leading-[25px] text-[#70ad47]">
        <div className="relative">
          <Fit w={125}>Modulusation</Fit>
          <svg className="absolute bottom-[-1px] left-0" width="125" height="3">
            <path d={"M0 2.500" + "l2-2l2 2".repeat(31)} fill="none" stroke="#d8282c" strokeWidth=".9" />
          </svg>
        </div>
        <Fit w={87}>du projet:</Fit>
      </div>
      <div className="ml-[103px] mt-[578px] h-px w-[923px] bg-[#7f7f7f]" />
      <div className="ml-[94px] mt-[11px] flex w-[863px] justify-between text-[13.5px] leading-5 text-[#7f7f7f]">
        <Fit w={133}>{"Projet de  Fin D'Année"}</Fit>
        <Fit w={61}>2015-2016</Fit>
      </div>
      <div className="-mt-0.5 ml-[555px] text-[13.5px] leading-5 text-[#7f7f7f]"><Fit w={7}>3</Fit></div>
      <div className="absolute -left-px -top-px h-full w-full"><Diagram /></div>
      <div className="absolute left-[84px] top-[663px] h-[99px] w-[300px] rounded-[17px] border-[3px] border-black pl-[11px] pt-[11px] font-['Liberation_Sans',sans-serif] text-[16px] font-bold leading-[19px] text-[#e01b24]">
        <Fit w={209}>Amis,herbergé par qui ,msg</Fit>
        <Fit w={37.500}>privé</Fit>
      </div>
    </div>
  );
}

function Scrollbar() {
  return (
    <div className="flex w-[17px] shrink-0 flex-col items-center bg-[#9ebce6] pt-[3px]">
      <div className="h-[3px] w-[9px] bg-[#1d3a75]" />
      <div className="mt-[2px] flex h-[17px] w-4 items-center justify-center border border-[#8b97ac] bg-[#d5dae3]">
        <svg width="13" height="12" viewBox="0 0 13 12"><path d="M1 2l3-1 2 3 3-2 3 3v5l-3 1-2-3-3 2-3-3z" fill="#fff" stroke="#4e596d" /></svg>
      </div>
      <div className="flex h-[18px] w-[15px] items-center justify-center bg-[#7d9ecb]"><svg width="9" height="5"><path d="M0 5h9L4.500 0z" fill="#2c4a7c" /></svg></div>
      <div className="flex h-[764px] w-[15px] flex-col items-center justify-center gap-px rounded-sm border border-[#5e7397] bg-gradient-to-r from-[#e3e8f3] via-[#dce2ee] to-[#b9c3d3]">
        {[0, 1, 2, 3].map((i) => <i key={i} className="h-px w-2 bg-[#4d5f7e]" />)}
      </div>
      <div className="flex h-5 w-[15px] items-center justify-center bg-[#7d9ecb]"><svg width="9" height="5"><path d="M0 0h9L4.500 5z" fill="#2c4a7c" /></svg></div>
      <svg width="15" height="50" viewBox="0 0 15 50">
        <path d="M5 8l2.500-3L10 8zM5 12l2.500-3 2.500 3zM5 38h5l-2.500 3zM5 42h5l-2.500 3z" fill="#000" />
        <circle cx="7.500" cy="24" r="3" fill="#cfd8c8" stroke="#333" />
      </svg>
    </div>
  );
}

function Status() {
  const cell = "flex h-[22px] items-center border-r border-[#9dbbe0] pb-px shadow-[1px_0_0_#f0f6ff]";
  return (
    <div className="flex h-[23px] shrink-0 border-t border-[#5b84c4] bg-gradient-to-b from-[#d9e7fa] via-[#c0d6f3] via-50% to-[#dbeafb] text-xs text-[#15306e]">
      <div className={cell + " w-[85px] pl-2"}><Fit w={68}>Page : 1 sur 1</Fit></div>
      <div className={cell + " w-[59px] pl-[9px]"}><Fit w={40}>Mots : 3</Fit></div>
      <div className={cell + " w-[135px] pl-[8px]"}>
        <svg width="18" height="16" viewBox="0 0 18 16">
          <path d="M1 9l8-4 6 4-7 6z" fill="#f4f7fc" stroke="#4d6596" /><path d="M1 9l7 4 7-4" fill="none" stroke="#4d6596" />
          <path d="M8 1l7 7M15 1L8 8" stroke="#e03a24" strokeWidth="2.200" />
        </svg>
        <Fit w={85} className="ml-[15px]">Français (France)</Fit>
      </div>
      <div className="flex-1" />
      <div className="flex w-[285px] items-center border-l border-[#6d93cb] bg-gradient-to-b from-[#b6d0f3] via-[#8db2e8] via-50% to-[#a8c8f4] pb-px pl-[5px]">
        <div className="flex h-4 w-[92px] items-center border border-[#dbe9fb] bg-[#a9c8ef]">
          {[0, 1, 2, 3, 4].map((i) => (
            <div key={i} className={"flex h-[14px] w-[18px] items-center justify-center " + (i === 0 ? "bg-gradient-to-b from-[#fbe8b8] to-[#f5b74c]" : "")}>
              <svg width="12" height="12" viewBox="0 0 12 12" fill="none" stroke="#445577">
                {i === 0 && <><path d="M1.500.5h9v11h-9z" fill="#fff" /><path d="M3 3.500h6M3 5.500h6M3 7.500h6M3 9.500h6" /></>}
                {i === 1 && <><path d="M.5 1.500L6 3l5.500-1.500v9L6 11.500.500 10.500zM6 3v8" fill="#fff" /><path d="M2 4.500h3M7 4.500h3M2 6.500h3M7 6.500h3M2 8.500h3M7 8.500h3" strokeWidth=".8" /></>}
                {i === 2 && <><path d="M.5.5h9v10h-9z" fill="#fff" /><path d="M2 3.500h6M2 5.500h4" /><circle cx="8.500" cy="8.500" r="3" fill="#3b9a58" stroke="#24648c" /></>}
                {i === 3 && <path d="M1 1.500h9M3 3.500h8M5 5.500h6M3 7.500h6M5 9.500h6" stroke="#617699" />}
                {i === 4 && <path d="M1 1.500h10M1 3.500h10M1 5.500h10M1 7.500h10M1 9.500h10" />}
              </svg>
            </div>
          ))}
        </div>
        <Fit w={30} className="ml-[8px] leading-5">100 %</Fit>
        <svg className="ml-[9px]" width="138" height="18" viewBox="0 0 138 18">
          <path d="M17 9h103" stroke="#dbe8fb" strokeWidth="2" /><path d="M17 8.500h103" stroke="#5b7db8" />
          <path d="M67 4.500v9" stroke="#5b7db8" />
          <circle cx="9" cy="9" r="7" fill="#eef3fa" stroke="#4f6ea5" /><path d="M5 9h8" stroke="#33435f" strokeWidth="2" />
          <circle cx="127" cy="9" r="7" fill="#eef3fa" stroke="#4f6ea5" /><path d="M123 9h8M127 5v8" stroke="#33435f" strokeWidth="2" />
          <path d="M63.500 3.500h7v7L67 14l-3.500-3.500z" fill="#eaf1fb" stroke="#3f5f98" /><path d="M67 5v5" stroke="#7f94b8" />
        </svg>
      </div>
    </div>
  );
}

/* ---------- Taskbar ---------- */

const Shield = () => (
  <g transform="translate(17 15)">
    <path d="M0 2q5 0 6.500-2Q8 2 13 2q0 9-6.500 13Q0 11 0 2z" fill="#eee" />
    <path d="M1 3q4 0 5.500-1.500V7H1.200zM6.500 7h5.300Q11 11 6.500 14z" fill="#2f72d0" />
    <path d="M6.500 1.500Q8 3 12 3l-.2 4H6.500zM1.200 7h5.300v7Q2 11 1.200 7z" fill="#f5c93a" />
  </g>
);

const apps: [boolean, React.ReactNode][] = [
  [false, <><path d="M1 1h10v11L21 1h10L20 16l-7 3-2 2v10H1z" fill="#e33a36" stroke="#f6dcdc" strokeWidth="1" /><path d="M12 20l5-4 7 6 6-6 1 15H20l2-4z" fill="#1b1b1b" stroke="#ddd" strokeWidth="1.200" /></>],
  [false, <><path d="M5 24h22l3 6H2z" fill="#f28a1c" /><path d="M14 2q2-2 4 0l6 24H8z" fill="#f0801c" /><path d="M12.700 7h6.600l1.300 5h-9zM10.300 17h11.400l1.400 5H9z" fill="#f5f1ee" /></>],
  [false, <><circle cx="16" cy="16" r="15" fill="#2f9a54" stroke="#eef8f0" strokeWidth="1.500" /><path d="M10 8v8q0 5 5 5 5 0 5-5V8m0 8q0 5 5 4M10 12v8l4 7" fill="none" stroke="#fff" strokeWidth="3.600" /></>],
  [true, <><path d="M2 6l5-2 4 2h17v20H2z" fill="#efd48a" stroke="#b8934a" /><path d="M4 3h6v4H4zM12 4h5v4h-5zM19 5h6v3h-6z" fill="#fff" /><path d="M5 3h2v2H5zM13 4h2v2h-2z" fill="#3a9b4b" /><path d="M20 5h3v2h-3z" fill="#c33" /><path d="M2 9h27v15H2z" fill="#f7e4a4" /><path d="M6 30V20q0-2 2-2h16q2 0 2 2v10h-5v-7H11v7z" fill="#a9d4ee" stroke="#5f9cc8" /></>],
  [false, <><path d="M2.500 2.500h26v27h-26z" fill="#0a1538" stroke="#5c88d8" strokeWidth="1.500" /><text x="5" y="21" fontSize="16" fontWeight="bold" fill="#9fc6ff" fontFamily="Liberation Sans, sans-serif">Ps</text><Shield /></>],
  [false, <><path d="M7 2h18l4 5v17l-4 6H7l-4-6V7z" fill="#e5148a" /><path d="M9 7h14M9 11v9q0 4 3.500 4T16 20v-6 6q0 4 3.500 4t3.500-4v-9" fill="none" stroke="#5c0735" strokeWidth="2.500" /><Shield /></>],
  [true, <><circle cx="16" cy="15.500" r="14" fill="#2f6db8" /><path d="M14 5q8-2 12 5t-2 12-12 1z" fill="#5fb0e6" /><path d="M3 6q-4 10 2 18 7 8 17 4 9-4 8-15-2 9-9 11-6 1-9-3l5-1-6-3 1-5 5-1-6-3-5 1z" fill="#f07c1c" /><path d="M3 8q-2 9 4 15 5 5 12 4-9-4-12-12z" fill="#fbb53a" /></>],
  [true, <><path d="M3 3h22v27H3z" fill="#fbfbf2" stroke="#8a8a7a" /><path d="M3 22h22v8H3z" fill="#8fd43a" /><path d="M5 3v-2M9 3v-2M13 3v-2M17 3v-2M21 3v-2" stroke="#555" strokeWidth="1.500" /><text x="5" y="18" fontSize="12" fontFamily="Liberation Sans, sans-serif">n++</text><path d="M20 21l8-17 3 2-8 17-3 2z" fill="#f0b63c" stroke="#97691a" strokeWidth=".7" /></>],
  [true, <><path d="M1 3h30v26H1z" fill="#4f9fd8" stroke="#2a6ca0" /><path d="M5 6h22v19H5z" fill="#cfe8f8" /><path d="M5 14q10-6 22 0v5H5z" fill="#6aa9cf" /><path d="M5 18q5-4 10 0h12v7H5z" fill="#3f7a63" /><path d="M5 21h22v4H5z" fill="#2f78a8" /></>],
  [true, <><path d="M2.500 2.500h27v27h-27z" fill="#2a0d0c" stroke="#d5281e" strokeWidth="2" /><path d="M15 7q3 0 1 8-4 9-8 9 0-3 9-6 8-1 8 1-3 2-8-4-4-5-2-8z" fill="none" stroke="#fff" strokeWidth="1.600" /></>],
  [true, <><path d="M6 2h20v26H6z" fill="#3567b5" rx="2" /><path d="M6 2Q2 4 2 28h5Q8 12 12 4z" fill="#dce8fa" stroke="#3464ae" /><path d="M10 5l20 2v23l-20-3z" fill="#f6f9ff" stroke="#6489c4" /><text x="11" y="19" fontSize="13" fontWeight="bold" fill="#2757ab" fontFamily="Liberation Serif, serif">W</text><path d="M13 22.500h6M13 25.500h6M25 11h4M25 14h4M25 17h4M22 20h6M22 23h6" stroke="#3f6fc0" strokeWidth="1.600" /></>],
];

function Taskbar() {
  return (
    <div className="flex h-[39px] shrink-0 items-center border-t border-[#a88] bg-[linear-gradient(90deg,#5f0405_0,#5a0203_50%,#5c0304_75%,#6a1214_82%,#560204_90%,#601a1c_100%)] pb-px text-xs text-white">
      <div className="flex w-[60px] justify-center pr-[5px]">
        <svg width="38" height="37" viewBox="0 0 38 37">
          <defs>
            <radialGradient id="start" cx=".5" cy=".8"><stop offset="0" stopColor="#6fd3ee" /><stop offset=".6" stopColor="#2b6a98" /><stop offset="1" stopColor="#6a8ca4" /></radialGradient>
          </defs>
          <circle cx="19" cy="18.500" r="17.500" fill="url(#start)" stroke="#2c3a52" />
          <ellipse cx="19" cy="10" rx="14" ry="8" fill="#fff" opacity=".3" />
          <path d="M10 11q4-3 8 0l-1 7q-4-2-8 0z" fill="#ee5a24" /><path d="M20 12q4 2 8-1l-1 7q-4 3-8 1z" fill="#8cc63e" />
          <path d="M9 20q4-2 8 0l-1 7q-4-3-8-1z" fill="#3b9be0" /><path d="M18 21q4 2 8-1l-1 7q-4 3-8 1z" fill="#fbc52c" />
        </svg>
      </div>
      {apps.map(([open, icon], i) => (
        <div
          key={i}
          className={
            "mr-1 flex h-[37px] w-[58px] shrink-0 items-center justify-center rounded-[3px] border " +
            (!open
              ? "border-transparent"
              : i === 10
              ? "border-[#e6cccc] bg-gradient-to-b from-[#d9bebe] to-[#b98c8c]"
              : "border-[#b68d8d] bg-gradient-to-br from-[#b58c8c] via-[#84403f] via-50% to-[#74302f]")
          }
        >
          <svg width="32" height="32" viewBox="0 0 32 32">{icon}</svg>
        </div>
      ))}
      <div className="flex-1" />
      <Fit w={14} className="-mt-1 mr-[17px]">FR</Fit>
      <svg className="mr-[12px] mt-1" width="8" height="4"><path d="M0 4h8L4 0z" fill="#fff" /></svg>
      <svg className="mr-[7px]" width="16" height="16" viewBox="0 0 32 32"><circle cx="16" cy="16" r="15" fill="#1e9a50" stroke="#fff" strokeWidth="2" /><path d="M10 9v8q0 5 5 5t5-5V9m0 8q0 5 5 4M10 12v14" fill="none" stroke="#fff" strokeWidth="4" /></svg>
      <svg className="mr-[9px]" width="17" height="15" viewBox="0 0 17 15"><circle cx="10.500" cy="6.500" r="6" fill="#3f7fc4" /><path d="M6 3q4-4 8-1l-3 4-5 1zM12 7l4-1-3 6z" fill="#6fd04a" /><path d="M0 7q3 5 9 4v-2l4 3-4 3v-2Q2 14 0 7z" fill="#f2d53a" /></svg>
      <svg className="mr-[9px]" width="15" height="13" viewBox="0 0 15 13"><path d="M0 10h2v3H0zM3 9h2v4H3zM6 6h2v7H6zM9 3h2v10H9zM12 0h2v13h-2z" fill="#fff" /></svg>
      <svg className="mr-[14px]" width="15" height="15" viewBox="0 0 15 15"><path d="M0 4h3l4-4v13L3 9H0z" fill="#fff" /><circle cx="10" cy="10" r="4.500" fill="#e32620" stroke="#fff" strokeWidth=".8" /><path d="M7 7l6 6" stroke="#fff" strokeWidth="1.500" /></svg>
      <div className="flex w-[66px] flex-col items-center leading-[17px]">
        <Fit w={28}>15:46</Fit>
        <Fit w={58}>16/02/2016</Fit>
      </div>
      <div className="ml-[9px] mr-px h-[37px] w-[12px] border border-[#a87a7a] bg-gradient-to-b from-[#9a6464] to-[#5a1818]" />
    </div>
  );
}

export default function App() {
  return (
    <div className="relative flex h-[1080px] w-[1920px] flex-col overflow-hidden bg-[#9ebce4] font-['Noto_Sans','Open_Sans',sans-serif]">
      <TitleBar />
      <OfficeButton />
      <Ribbon />
      <div className="flex h-[878px] shrink-0">
        <div className="flex w-[1903px] flex-col">
          <div className="flex h-[26px] shrink-0 bg-[#9ebce4]">
            <div className="mt-[2px] flex h-6 w-6 items-center justify-center border border-[#5f8bd0] bg-[#bdd5f5]">
              <div className="flex h-[15px] w-[15px] items-center justify-center border border-[#4a70b0] bg-[#dce8fa]">
                <svg width="6" height="7"><path d="M1 0v6h5" fill="none" stroke="#222" strokeWidth="2" /></svg>
              </div>
            </div>
            <div className="relative ml-[377px] mt-[7px] h-[13px] w-[1125px]">
              <div className="flex h-full overflow-hidden border border-[#d9e7fa] bg-[linear-gradient(90deg,#b3caec_94px,#fff_94px,#fff_1027px,#b3caec_1027px)]">
                <span className="-ml-[6px]" />
                <Marks from={-10} to={108} />
              </div>
              <svg className="absolute left-[113px] top-[-3px]" width="10" height="22" viewBox="0 0 10 22">
                <path d="M1 .5h8v3L5 8 1 3.500zM1 14v-3L5 7.500 9 11v3zM1 15.500h8v5H1z" fill="#e8eef8" stroke="#4b6493" />
              </svg>
              <svg className="absolute left-[1023px] top-[5px]" width="10" height="8" viewBox="0 0 10 8">
                <path d="M1 7.500V4l4-3.500L9 4v3.500z" fill="#e8eef8" stroke="#4b6493" />
              </svg>
            </div>
          </div>
          <div className="flex h-[852px]">
            <div className="w-6 shrink-0 bg-[#9ebce4] pl-[5px] pt-4">
              <div className="flex h-[799px] w-[14px] flex-col overflow-hidden border border-[#d9e7fa] bg-[linear-gradient(180deg,#b3caec_97px,#fff_97px,#fff_697px,#b3caec_697px)]">
                <span className="-mt-[4px]" />
                <Marks from={-10} to={73} vertical />
              </div>
            </div>
            <div className="relative flex-1 bg-[linear-gradient(180deg,#9dbbe5_0,#7c9fd0_35%,#6d92c4_52%,#507bb1_73%,#5f88c0_86%,#6c95d2_100%)]">
              <svg className="absolute left-0 top-0" width="312" height="118" viewBox="0 0 312 118">
                <path d="M0 0H312Q120 55 0 116z" fill="#a6c4e8" opacity=".45" />
                <path d="M0 0H310Q130 45 0 93z" fill="#bcd4f2" opacity=".55" />
              </svg>
              <Page />
            </div>
          </div>
        </div>
        <Scrollbar />
      </div>
      <Status />
      <Taskbar />
    </div>
  );
}
